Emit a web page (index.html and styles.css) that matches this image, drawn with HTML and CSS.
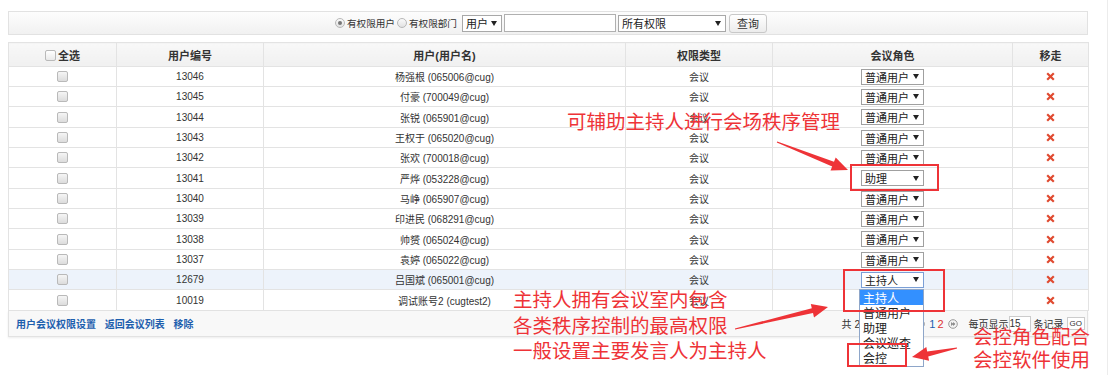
FILE: index.html
```html
<!DOCTYPE html>
<html lang="zh-CN">
<head>
    <meta charset="UTF-8">
    <title>会议用户权限</title>
    <link rel="stylesheet" href="styles.css">
</head>
<body>
<div class="page">
    <div class="panel">
        <div class="toolbar">
            <span class="radio on"></span><span class="rlabel">有权限用户</span>
            <span class="radio"></span><span class="rlabel">有权限部门</span>
            <span class="sel sel-type">用户<i class="arr"></i></span>
            <span class="txt"></span>
            <span class="sel sel-perm">所有权限<i class="arr"></i></span>
            <span class="btn">查询</span>
        </div>

        <table class="list">
            <colgroup>
                <col style="width:108px"><col style="width:147px"><col style="width:362px">
                <col style="width:147px"><col style="width:240px"><col style="width:76px">
            </colgroup>
            <thead>
                <tr>
                    <th><span class="cb head-cb"></span>全选</th>
                    <th>用户编号</th>
                    <th>用户(用户名)</th>
                    <th>权限类型</th>
                    <th>会议角色</th>
                    <th>移走</th>
                </tr>
            </thead>
            <tbody id="rows"></tbody>
        </table>

        <div class="foot">
            <div class="links">
                <a>用户会议权限设置</a>
                <a>返回会议列表</a>
                <a>移除</a>
            </div>
            <div class="pager">
                <span class="total">共 22 条记录</span>
                <svg class="pg-ico" width="10" height="10" viewBox="0 0 10 10"><circle cx="5" cy="5" r="4.3" fill="#f3f3f3" stroke="#9a9a9a"/><path d="M6 3 L3.5 5 L6 7 Z" fill="#777"/></svg>
                <span class="pn">1</span>
                <span class="pn cur">2</span>
                <svg class="pg-ico" width="10" height="10" viewBox="0 0 10 10"><circle cx="5" cy="5" r="4.3" fill="#f3f3f3" stroke="#9a9a9a"/><path d="M3.2 3 L5.2 5 L3.2 7 Z M5.2 3 L7.2 5 L5.2 7 Z" fill="#777"/></svg>
                <span class="per">每页显示</span><span class="num">15</span><span class="per">条记录</span>
                <span class="go">GO</span>
            </div>
        </div>
    </div>

    <!-- open dropdown of the 12679 row -->
    <div class="droplist">
        <div class="opt active">主持人</div>
        <div class="opt">普通用户</div>
        <div class="opt">助理</div>
        <div class="opt">会议巡查</div>
        <div class="opt">会控</div>
    </div>

    <!-- annotations -->
    <div class="note note-a">可辅助主持人进行会场秩序管理</div>
    <div class="note note-b">主持人拥有会议室内包含<br>各类秩序控制的最高权限<br>一般设置主要发言人为主持人</div>
    <div class="note note-c">会控角色配合<br>会控软件使用</div>

    <svg class="marks" width="1109" height="375" viewBox="0 0 1109 375">
        <rect x="851" y="165" width="87" height="25" fill="none" stroke="#ee3337" stroke-width="2"/>
        <rect x="844" y="270" width="100" height="41" fill="none" stroke="#ee3337" stroke-width="2"/>
        <rect x="848" y="344" width="58" height="22" fill="none" stroke="#ee3337" stroke-width="2"/>
        <polygon points="776.8,142.5 832.2,166.4 830.5,170.6 848,170 835.7,157.6 834.0,161.8 777.2,141.5" fill="#ee3337"/>
        <polygon points="735.1,329.5 813.0,313.1 814.0,317.5 828,307 810.8,303.9 811.8,308.3 734.9,328.5" fill="#ee3337"/>
        <polygon points="956.9,347.5 927.2,351.4 926.3,347.0 912,357 929.1,360.8 928.2,356.4 957.1,348.5" fill="#ee3337"/>
    </svg>
</div>

<script>
const users = [
    ["13046", "杨强根 (065006@cug)", "普通用户"],
    ["13045", "付豪 (700049@cug)", "普通用户"],
    ["13044", "张锐 (065901@cug)", "普通用户"],
    ["13043", "王权于 (065020@cug)", "普通用户"],
    ["13042", "张欢 (700018@cug)", "普通用户"],
    ["13041", "严烨 (053228@cug)", "助理"],
    ["13040", "马峥 (065907@cug)", "普通用户"],
    ["13039", "印进民 (068291@cug)", "普通用户"],
    ["13038", "帅赟 (065024@cug)", "普通用户"],
    ["13037", "袁婷 (065022@cug)", "普通用户"],
    ["12679", "吕国斌 (065001@cug)", "主持人"],
    ["10019", "调试账号2 (cugtest2)", "普通用户"]
];

const cross = '<svg width="9" height="9" viewBox="0 0 9 9"><path d="M1.2 1.2 L7.8 7.8 M7.8 1.2 L1.2 7.8" stroke="#e04a30" stroke-width="2.2"/></svg>';
const rows = document.getElementById('rows');

users.forEach(u => {
    const picked = u[0] === '12679';
    rows.innerHTML += `<tr class="${picked ? 'hl' : ''}">
        <td><span class="cb"></span></td>
        <td>${u[0]}</td>
        <td>${u[1]}</td>
        <td class="zh">会议</td>
        <td><span class="sel role${picked ? ' focus' : ''}">${u[2]}<i class="arr"></i></span></td>
        <td>${cross}</td>
    </tr>`;
});
</script>
</body>
</html>
```

FILE: styles.css
```css
* {
    box-sizing: border-box;
}

body {
    margin: 0;
    font-family: "Liberation Sans", "Noto Sans CJK SC", sans-serif;
    font-size: 10px;
    color: #333;
    background: #fff;
}

.page {
    position: relative;
    width: 1108px;
    height: 375px;
    border-right: 1px solid #ececec;
    overflow: hidden;
}

.panel {
    width: 1080px;
    margin: 11px 0 0 8px;
}

/* search bar */
.toolbar {
    height: 24px;
    border: 1px solid #e2e2e2;
    background: linear-gradient(#fdfdfd, #f1f1f1);
    display: flex;
    align-items: center;
    padding-left: 326px;
    margin-bottom: 7px;
}

.radio {
    width: 10px;
    height: 10px;
    border: 1px solid #b8b8b8;
    border-radius: 50%;
    background: linear-gradient(#fafafa, #e2e2e2);
    position: relative;
}

.radio.on::after {
    content: "";
    position: absolute;
    left: 2px;
    top: 2px;
    width: 4px;
    height: 4px;
    border-radius: 50%;
    background: #777;
}

.rlabel {
    margin: 0 2px 0 2px;
    font-size: 9.6px;
}

.sel {
    display: inline-flex;
    align-items: center;
    justify-content: space-between;
    height: 17px;
    padding: 0 4px 0 3px;
    border: 1px solid #a8a8a8;
    background: #fff;
    font-size: 11px;
    color: #222;
}

.arr {
    width: 0;
    height: 0;
    border-left: 3px solid transparent;
    border-right: 3px solid transparent;
    border-top: 5px solid #222;
}

.sel-type {
    width: 40px;
    margin-left: 3px;
}

.txt {
    width: 112px;
    height: 18px;
    margin: 0 2px;
    border: 1px solid #b0b0b0;
    background: #fff;
}

.sel-perm {
    width: 108px;
}

.btn {
    width: 38px;
    height: 19px;
    margin-left: 3px;
    border: 1px solid #c8c8c8;
    border-radius: 3px;
    background: linear-gradient(#fff, #ececec);
    font-size: 11px;
    display: flex;
    align-items: center;
    justify-content: center;
}

/* table */
.list {
    width: 1080px;
    border-collapse: collapse;
    table-layout: fixed;
}

.list th,
.list td {
    border: 1px solid #e3e3e3;
    text-align: center;
    padding: 0;
}

.list th {
    height: 24px;
    background: linear-gradient(#f8f8f8, #f0f0f0);
    font-size: 11px;
    font-weight: bold;
    color: #333;
}

.list td {
    height: 20px;
    font-size: 10px;
    color: #333;
}

.list tr:nth-child(3n) td {
    height: 21px;
}

.list td.zh {
    font-size: 10px;
}

.list tr.hl td {
    background: #edf3fb;
}

.list td svg {
    display: block;
    margin: 0 auto;
}

.cb {
    display: inline-block;
    width: 11px;
    height: 11px;
    border: 1px solid #b9b9b9;
    border-radius: 2px;
    background: linear-gradient(#f5f5f5, #dcdcdc);
    vertical-align: middle;
}

.head-cb {
    margin: -2px 2px 0 0;
    background: linear-gradient(#fff, #e9e9e9);
}

.sel.role {
    width: 63px;
    height: 16px;
    font-size: 11px;
    border-color: #a0a0a0;
}

.sel.role.focus {
    border-color: #7b9fd6;
}

/* footer */
.foot {
    height: 26px;
    border: 1px solid #e2e2e2;
    border-top: 0;
    background: #f8f8f8;
    box-shadow: 0 1px 2px rgba(0, 0, 0, 0.08);
    display: flex;
    align-items: center;
    justify-content: space-between;
    padding: 0 2px 0 7px;
}

.links a {
    color: #1d5fae;
    font-weight: bold;
    margin-right: 6px;
    font-size: 10px;
}

.pager {
    display: flex;
    align-items: center;
    font-size: 10px;
    color: #333;
}

.total {
    margin-right: 14px;
}

.pg-ico {
    margin: 0 3px;
}

.pn {
    color: #1d5fae;
    margin: 0 1px;
    font-size: 11px;
}

.pn.cur {
    color: #d33;
}

.per {
    margin-left: 8px;
}

.num {
    width: 22px;
    height: 16px;
    border: 1px solid #ccc;
    background: #fff;
    display: flex;
    align-items: center;
}

.per + .num + .per {
    margin-left: 3px;
}

.go {
    margin-left: 3px;
    border: 1px solid #ccc;
    background: #fff;
    padding: 1px 2px;
    font-size: 8px;
}

/* open select list */
.droplist {
    position: absolute;
    left: 859px;
    top: 289px;
    width: 65px;
    border: 1px solid #8ea6c9;
    background: #fff;
    padding-bottom: 1px;
}

.opt {
    height: 15px;
    line-height: 15px;
    padding-left: 3px;
    font-family: "Noto Sans CJK SC", sans-serif;
    font-size: 12px;
    color: #222;
}

.opt.active {
    background: #3390ff;
    color: #fff;
}

/* red annotations */
.note {
    position: absolute;
    font-family: "Noto Sans CJK SC", sans-serif;
    color: #ee3337;
    white-space: nowrap;
}

.note-a {
    left: 567px;
    top: 111px;
    font-size: 19.5px;
    line-height: 20px;
}

.note-b {
    left: 513px;
    top: 286px;
    font-size: 19.5px;
    line-height: 25.5px;
}

.note-c {
    left: 973px;
    top: 324px;
    font-size: 19.5px;
    line-height: 23px;
}

.marks {
    position: absolute;
    left: 0;
    top: 0;
    pointer-events: none;
}
```
